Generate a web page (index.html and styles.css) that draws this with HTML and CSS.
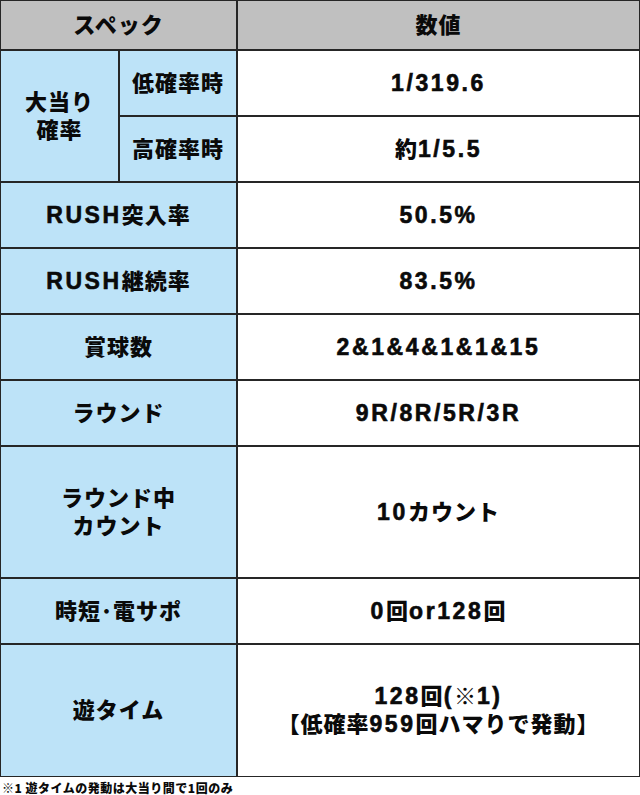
FILE: index.html
```html
<!DOCTYPE html>
<html lang="ja">
<head>
<meta charset="utf-8">
<title>スペック</title>
<link rel="stylesheet" href="styles.css">
</head>
<body>
<div class="spec">
  <div class="cell head span2">スペック</div>
  <div class="cell head">数値</div>

  <div class="cell label r2">大当り<br>確率</div>
  <div class="cell label">低確率時</div>
  <div class="cell value"><span class="en">1/319.6</span></div>
  <div class="cell label">高確率時</div>
  <div class="cell value">約<span class="en">1/5.5</span></div>

  <div class="cell label span2"><span class="en">RUSH</span>突入率</div>
  <div class="cell value"><span class="en">50.5%</span></div>

  <div class="cell label span2"><span class="en">RUSH</span>継続率</div>
  <div class="cell value"><span class="en">83.5%</span></div>

  <div class="cell label span2">賞球数</div>
  <div class="cell value"><span class="en">2&amp;1&amp;4&amp;1&amp;1&amp;15</span></div>

  <div class="cell label span2">ラウンド</div>
  <div class="cell value"><span class="en">9R/8R/5R/3R</span></div>

  <div class="cell label span2">ラウンド中<br>カウント</div>
  <div class="cell value"><span class="en">10</span>カウント</div>

  <div class="cell label span2">時短･電サポ</div>
  <div class="cell value"><span class="en">0</span>回<span class="en">or128</span>回</div>

  <div class="cell label span2">遊タイム</div>
  <div class="cell value"><span class="en">128</span>回<span class="en">(</span>※<span class="en">1)</span><br>【低確率<span class="en">959</span>回ハマりで発動】</div>
</div>
<p class="note">※1 遊タイムの発動は大当り間で1回のみ</p>
</body>
</html>
```

FILE: styles.css
```css
html, body {
  margin: 0;
  padding: 0;
  background: #ffffff;
}

body {
  width: 640px;
  font-family: "Noto Sans CJK JP", sans-serif;
  font-weight: 900;
  color: #0a0a0a;
}

.spec {
  display: grid;
  grid-template-columns: 117px 116px 1fr;
  grid-template-rows: 48px 64px 64px 64px 64px 64px 64px 130px 64px 131px;
  gap: 2px;
  padding: 1px;
  background: #262626;
}

.cell {
  display: block;
  align-content: center;
  text-align: center;
  padding-bottom: 5px;
  font-size: 22px;
  line-height: 28px;
  letter-spacing: 1px;
}

.en {
  font-family: "Liberation Sans", "Noto Sans CJK JP", sans-serif;
  font-weight: 700;
  font-size: 23px;
  line-height: 1;
  letter-spacing: 2.6px;
  -webkit-text-stroke: 0.6px #0a0a0a;
}

.head {
  background: #c0c0c0;
}

.label {
  background: #bde3f8;
}

.value {
  background: #ffffff;
  grid-column: 3;
}

.span2 {
  grid-column: 1 / span 2;
}

.r2 {
  grid-row: span 2;
}

.note {
  margin: 4px 0 0 2px;
  font-size: 12px;
  line-height: 14px;
  letter-spacing: 0.5px;
}
```
